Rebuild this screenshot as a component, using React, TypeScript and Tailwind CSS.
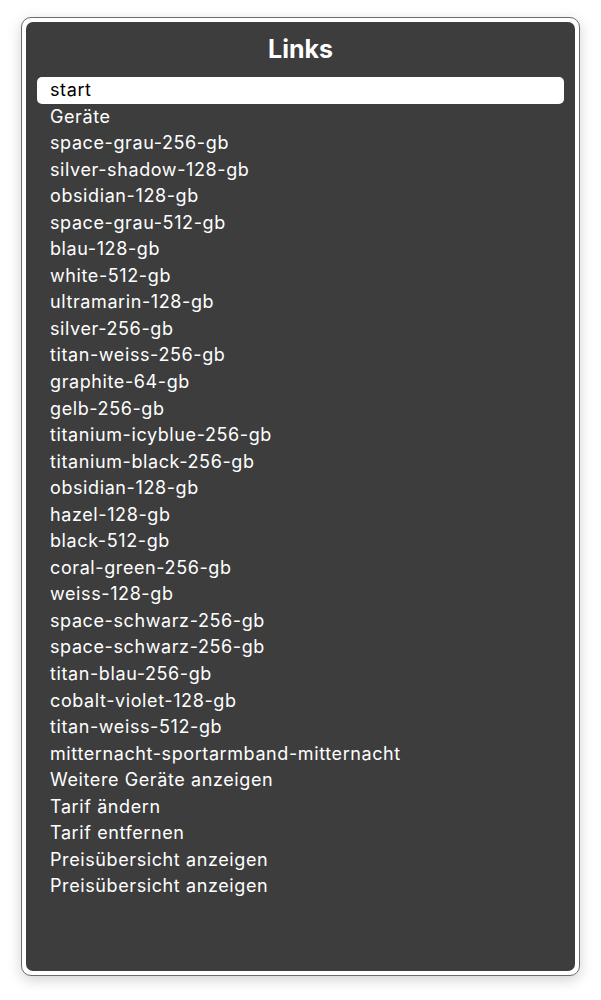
import React from 'react';

const links = [
  'start',
  'Geräte',
  'space-grau-256-gb',
  'silver-shadow-128-gb',
  'obsidian-128-gb',
  'space-grau-512-gb',
  'blau-128-gb',
  'white-512-gb',
  'ultramarin-128-gb',
  'silver-256-gb',
  'titan-weiss-256-gb',
  'graphite-64-gb',
  'gelb-256-gb',
  'titanium-icyblue-256-gb',
  'titanium-black-256-gb',
  'obsidian-128-gb',
  'hazel-128-gb',
  'black-512-gb',
  'coral-green-256-gb',
  'weiss-128-gb',
  'space-schwarz-256-gb',
  'space-schwarz-256-gb',
  'titan-blau-256-gb',
  'cobalt-violet-128-gb',
  'titan-weiss-512-gb',
  'mitternacht-sportarmband-mitternacht',
  'Weitere Geräte anzeigen',
  'Tarif ändern',
  'Tarif entfernen',
  'Preisübersicht anzeigen',
  'Preisübersicht anzeigen',
];

const App: React.FC = () => {
  return (
    <div className="w-[601px] h-[1000px] bg-white pt-[17px] pl-[21px] font-['Inter',sans-serif]">
      <div className="w-[559px] h-[959px] rounded-[10px] border border-[#6b6b6b] bg-white p-[4px] shadow-[0_4px_14px_rgba(0,0,0,0.18)]">
        <div className="h-full rounded-[7px] bg-[#3d3d3d] pt-[12px] px-[11px]">
          <h1 className="text-center text-[25px] font-bold leading-[30px] text-white">Links</h1>
          <ul className="mt-[13px]">
            {links.map((l, i) => (
              <li
                key={i}
                className={`h-[26.55px] rounded-[5px] pl-[13px] text-[18px] leading-[26.55px] tracking-[0.6px] ${
                  i === 0 ? 'bg-white text-black' : 'text-white'
                }`}
              >
                {l}
              </li>
            ))}
          </ul>
        </div>
      </div>
    </div>
  );
};

export default App;
